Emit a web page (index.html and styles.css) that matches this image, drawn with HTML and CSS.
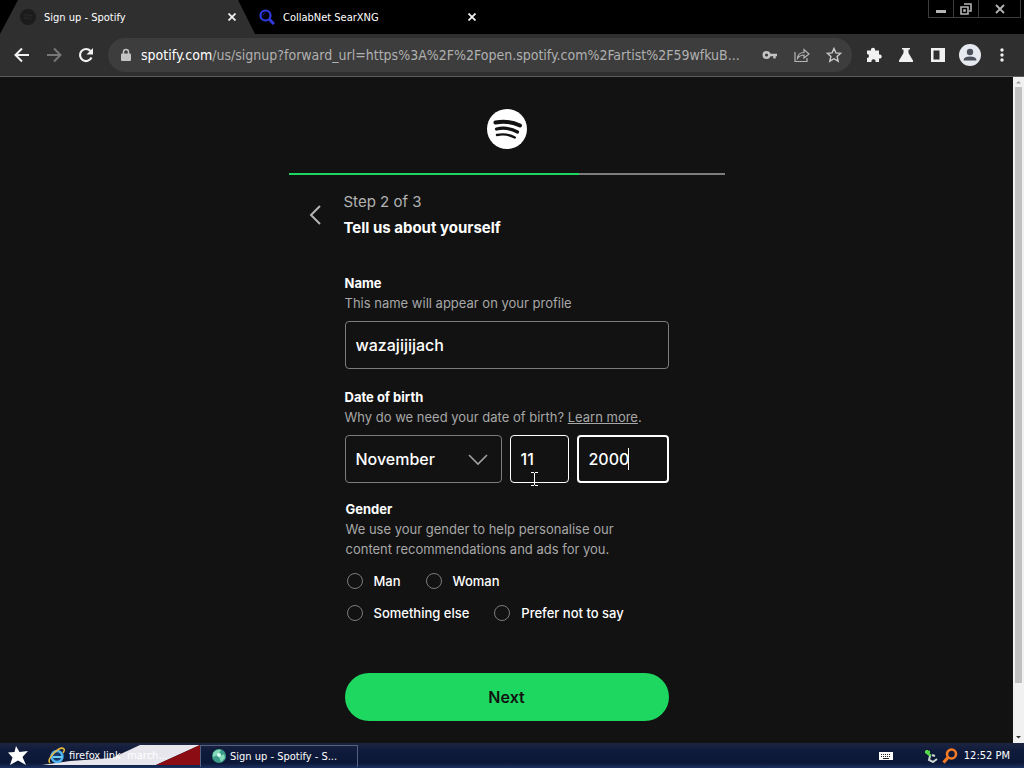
FILE: index.html
```html
<!DOCTYPE html>
<html lang="en">
<head>
  <meta charset="UTF-8">
  <meta name="viewport" content="width=device-width, initial-scale=1.0">
  <title>Sign up - Spotify</title>
  <link rel="stylesheet" href="styles.css">
</head>
<body>
  <!-- tabs -->
  <header class="tabs">
    <div class="tab active">
      <svg class="tab-icon" viewBox="0 0 16 16"><circle cx="8" cy="8" r="8" fill="#1c1c1c"/><path d="M4 6q4-1 8 1M4 9q4-1 7 1" stroke="#2c2c2c" fill="none"/></svg>
      <span class="tab-title">Sign up - Spotify</span>
      <button class="tab-close" aria-label="Close tab"><svg width="8" height="8" viewBox="0 0 8 8"><path d="M0.500 0.500l7 7M7.500 0.500l-7 7" stroke="#f1f1f1" stroke-width="1.800"/></svg></button>
    </div>
    <div class="tab">
      <svg class="tab-icon" viewBox="0 0 16 16"><circle cx="6.500" cy="6.500" r="5" fill="none" stroke="#3139e0" stroke-width="2.200"/><path d="M4 6.500q0-2.500 2.500-2.500" fill="none" stroke="#20259a"/><path d="M10.500 10.500l4.500 4.500" stroke="#3139e0" stroke-width="3"/></svg>
      <span class="tab-title">CollabNet SearXNG</span>
      <button class="tab-close" aria-label="Close tab"><svg width="8" height="8" viewBox="0 0 8 8"><path d="M0.500 0.500l7 7M7.500 0.500l-7 7" stroke="#f1f1f1" stroke-width="1.800"/></svg></button>
    </div>
    <div class="window-buttons">
      <button aria-label="Minimize"><svg width="12" height="12" viewBox="0 0 12 12"><path d="M1 7h10v3H1z" fill="#b5b5b5"/></svg></button>
      <button aria-label="Restore"><svg width="12" height="12" viewBox="0 0 12 12"><path d="M4 1h7v7H9M1 4h7v7H1zM4 7h1v1H4z" fill="none" stroke="#b5b5b5" stroke-width="1.600"/></svg></button>
      <button class="wide" aria-label="Close"><svg width="10" height="10" viewBox="0 0 10 10"><path d="M1 1l8 8M9 1l-8 8" stroke="#b5b5b5" stroke-width="1.800"/></svg></button>
    </div>
  </header>

  <!-- toolbar -->
  <nav class="toolbar">
    <button aria-label="Back"><svg width="16" height="16" viewBox="0 0 16 16"><path d="M15 8H2M8 1.500L1.500 8L8 14.500" fill="none" stroke="#f1f1f1" stroke-width="2"/></svg></button>
    <button aria-label="Forward"><svg width="16" height="16" viewBox="0 0 16 16"><path d="M1 8h13M8 1.500L14.500 8L8 14.500" fill="none" stroke="#777" stroke-width="2"/></svg></button>
    <button aria-label="Reload"><svg width="16" height="16" viewBox="0 0 16 16"><path d="M13.500 10.500A6 6 0 1 1 12.500 4" fill="none" stroke="#f1f1f1" stroke-width="2.200"/><path d="M15 1v6.500H8.500z" fill="#f1f1f1"/></svg></button>
    <div class="address">
      <svg width="12" height="14" viewBox="0 0 12 14"><path d="M3.500 6V4a2.500 2.500 0 0 1 5 0v2" fill="none" stroke="#c4c4c4" stroke-width="1.500"/><rect x="1" y="5.500" width="10" height="7.500" rx="1" fill="#c4c4c4"/></svg>
      <div class="url"><b>spotify.com</b>/us/signup?forward_url=https%3A%2F%2Fopen.spotify.com%2Fartist%2F59wfkuB...</div>
      <button aria-label="Passwords"><svg width="16" height="16" viewBox="0 0 16 16"><circle cx="4.500" cy="8" r="2.800" fill="none" stroke="#c4c4c4" stroke-width="2.400"/><path d="M7.500 8H15M12.500 8v3.500" stroke="#c4c4c4" stroke-width="2.400" fill="none"/></svg></button>
      <button aria-label="Share"><svg width="16" height="16" viewBox="0 0 16 16"><path d="M1 5v9.500h12V11" fill="none" stroke="#b5b5b5" stroke-width="1.200"/><path d="M3.500 11.500Q4 5.500 10 5.500V2.500l5 4.500l-5 4V8Q6 8 3.500 11.500z" fill="none" stroke="#b5b5b5" stroke-width="1.200"/></svg></button>
      <button aria-label="Bookmark"><svg width="16" height="16" viewBox="0 0 16 16"><path d="M8 1.500l1.900 4.400 4.800.4-3.600 3.200 1.100 4.700L8 11.700l-4.200 2.500 1.100-4.700L1.300 6.300l4.800-.4z" fill="none" stroke="#c9c9c9" stroke-width="1.400"/></svg></button>
    </div>
    <button aria-label="Extensions"><svg width="16" height="16" viewBox="0 0 16 16"><path d="M1 3.500h4a2.100 2.100 0 1 1 4 0h4v4a2.100 2.100 0 1 1 0 4V15H9.500a2.100 2.100 0 1 0-4 0H1v-4a2 2 0 1 0 0-4z" fill="#f1f1f1"/></svg></button>
    <button aria-label="Experiments"><svg width="16" height="16" viewBox="0 0 16 16"><path d="M4 1h8v1.500h-1.500V6L15 13.500V15H1v-1.500L5.500 6V2.500H4z" fill="#f1f1f1"/></svg></button>
    <button aria-label="Side panel"><svg width="16" height="16" viewBox="0 0 16 16"><path d="M1 1h14v14H1zM3.500 3.500v9h6v-9z" fill="#f1f1f1" fill-rule="evenodd"/></svg></button>
    <button aria-label="Profile"><svg width="22" height="22" viewBox="0 0 22 22"><circle cx="11" cy="11" r="11" fill="#e6e9ef"/><circle cx="11" cy="8" r="3.200" fill="#4b505a"/><path d="M4.500 16.500q0-4 6.500-4t6.500 4z" fill="#4b505a"/></svg></button>
    <button aria-label="Menu"><svg width="16" height="16" viewBox="0 0 16 16"><g fill="#f1f1f1"><circle cx="8" cy="3" r="1.700"/><circle cx="8" cy="8" r="1.700"/><circle cx="8" cy="13" r="1.700"/></g></svg></button>
  </nav>

  <div class="page">
    <main class="signup">
      <svg class="logo" viewBox="0 0 40 40" role="img" aria-label="Spotify"><circle cx="20" cy="20" r="20" fill="#fff"/><g fill="none" stroke="#121212" stroke-linecap="round"><path d="M8.500 13.500q13-2.500 24.500 3" stroke-width="4"/><path d="M9.500 20q11-2.500 21 3" stroke-width="3.200"/><path d="M10 26q9.500-2 17.800 2.500" stroke-width="2.400"/></g></svg>
      <div class="progress"><div class="progress-done"></div></div>

      <div class="step">
        <button class="back" aria-label="Go back"><svg width="24" height="24" viewBox="0 0 24 24"><path d="M16 3L7 12l9 9" fill="none" stroke="#b3b3b3" stroke-width="2"/></svg></button>
        <div>
          <div class="step-count">Step 2 of 3</div>
          <h1>Tell us about yourself</h1>
        </div>
      </div>

      <form class="form">
        <div class="group">
          <label class="label" for="name">Name</label>
          <p class="help">This name will appear on your profile</p>
          <input class="field" type="text" id="name" value="wazajijijach">
        </div>

        <div class="group">
          <label class="label" for="month">Date of birth</label>
          <p class="help">Why do we need your date of birth? <a href="#">Learn more</a>.</p>
          <div class="date">
            <div class="month">
              <select class="field" id="month">
                <option>November</option>
              </select>
              <svg class="arrow" width="20" height="12" viewBox="0 0 20 12"><path d="M1 1l9 9 9-9" fill="none" stroke="#a0a0a0" stroke-width="1.600"/></svg>
            </div>
            <div class="day">
              <input class="field light" type="text" aria-label="Day" value="11">
              <svg class="pointer" width="7" height="14" viewBox="0 0 7 14"><path d="M0 .5h3M4 .5h3M3.500 1v12M0 13.500h3M4 13.500h3" stroke="#fff"/></svg>
            </div>
            <div class="year">
              <input class="field focused" type="text" aria-label="Year" value="2000">
              <span class="caret"></span>
            </div>
          </div>
        </div>

        <fieldset class="gender">
          <legend class="label">Gender</legend>
          <p class="help">We use your gender to help personalise our content recommendations and ads for you.</p>
          <div class="radios">
            <label><input type="radio" name="gender">Man</label>
            <label><input type="radio" name="gender">Woman</label>
          </div>
          <div class="radios">
            <label><input type="radio" name="gender">Something else</label>
            <label><input type="radio" name="gender">Prefer not to say</label>
          </div>
        </fieldset>

        <button class="next" type="submit">Next</button>
      </form>
    </main>

    <div class="scrollbar">
      <svg width="11" height="10" viewBox="0 0 11 10"><path d="M3 6.500h5L5.500 4z" fill="#9a9a9a"/></svg>
      <div class="thumb"></div>
      <svg width="11" height="12" viewBox="0 0 11 12"><path d="M3 5h5L5.500 7.500z" fill="#333"/></svg>
    </div>
  </div>

  <!-- taskbar -->
  <footer class="taskbar">
    <button class="start" aria-label="Start"><svg width="20" height="20" viewBox="0 0 20 20"><path d="M8 0l3.500 6L20 5l-5.500 6L18 19l-8-4.500L2 19l2.500-7.500L0 6.500l6.500-.5z" fill="#fff"/></svg></button>
    <button class="task">
      <svg class="flag" viewBox="0 0 158 20" preserveAspectRatio="none"><path d="M0 20L28 16L70 13L98 0h60l-44 20z" fill="#e6e6ec"/><path d="M158 0v20h-44z" fill="#8b0c12"/></svg>
      <svg class="task-icon" width="18" height="18" viewBox="0 0 18 18"><circle cx="9" cy="9.500" r="5.500" fill="#163a6b" stroke="#4fb4ee" stroke-width="2.500"/><path d="M5 10h9" stroke="#6ecbf5" stroke-width="2"/><path d="M2 16Q-1 13 6 6T16 2q1 1-1 4" fill="none" stroke="#e9ba42" stroke-width="1.600"/></svg>
      <span class="task-title">firefox link&nbsp; march...</span>
    </button>
    <button class="task current">
      <svg class="task-icon" width="16" height="16" viewBox="0 0 16 16"><circle cx="8" cy="8" r="7" fill="#3c9c89"/><path d="M2 5q4-5 8-3l-3 5-5 2zM8 9l5-3 1 4-4 4z" fill="#83d9b8"/><circle cx="8" cy="7" r="2" fill="#d5fff0"/></svg>
      <span class="task-title">Sign up - Spotify - S...</span>
    </button>
    <div class="tray">
      <svg class="keyboard" width="14" height="8" viewBox="0 0 14 8"><path d="M0 0h14v8H0z" fill="#fff"/><path d="M2 2.500h10M2 4.500h10" stroke="#222" stroke-dasharray="1 1"/><path d="M4 6.500h6" stroke="#222"/></svg>
      <svg width="14" height="14" viewBox="0 0 14 14"><path d="M3 1v3l4 3M1 3h5" stroke="#55d84a" stroke-width="2.400" fill="none"/><path d="M6 7l-1 4 4 2 4-3M8 6l3 1" stroke="#c8d6cf" stroke-width="2" fill="none"/></svg>
      <svg width="16" height="16" viewBox="0 0 16 16"><circle cx="9.500" cy="6" r="4.500" fill="none" stroke="#f47a24" stroke-width="2.600"/><path d="M6 9.500L1.500 14.500" stroke="#f47a24" stroke-width="3.200"/></svg>
      <time>12:52 PM</time>
    </div>
  </footer>
</body>
</html>
```
FILE: styles.css
```css
* {
  box-sizing: border-box;
}
body {
  margin: 0;
  height: 100vh;
  display: flex;
  flex-direction: column;
  overflow: hidden;
  background: #121212;
  color: #fff;
  font-family: "DejaVu Sans Condensed", "DejaVu Sans", sans-serif;
  font-size: 11px;
}
button {
  padding: 0;
  border: none;
  background: none;
  color: inherit;
  font: inherit;
  display: flex;
  align-items: center;
  justify-content: center;
}
svg {
  display: block;
  flex-shrink: 0;
}

/* browser */
.tabs {
  display: flex;
  align-items: flex-start;
  height: 34px;
  background: #000;
}
.tab {
  display: flex;
  align-items: center;
  width: 240px;
  height: 34px;
  padding: 0 16px 0 4px;
}
.tab.active {
  width: 255px;
  padding-left: 20px;
  background: #2f2f2f;
  clip-path: polygon(18px 0, 238px 0, 255px 100%, 0 100%);
}
.tab-icon {
  width: 16px;
  height: 16px;
  margin-right: 8px;
}
.tab-title {
  flex: 1;
}
.tab-close {
  width: 14px;
  height: 14px;
}
.window-buttons {
  display: flex;
  margin: 0 3px 0 auto;
  border: 1px solid #3c3c3c;
  border-top: none;
}
.window-buttons button {
  width: 25px;
  height: 17px;
  border-right: 1px solid #3c3c3c;
}
.window-buttons .wide {
  width: 41px;
  border-right: none;
}
.toolbar {
  display: flex;
  align-items: center;
  height: 43px;
  padding: 0 6px;
  background: #2f2f2f;
  border-bottom: 1px solid #5c5c5c;
}
.toolbar button {
  width: 32px;
  height: 32px;
  flex-shrink: 0;
}
.address {
  flex: 1;
  min-width: 0;
  display: flex;
  align-items: center;
  height: 34px;
  margin: 0 6px;
  padding: 0 2px 0 12px;
  border-radius: 17px;
  background: #3d3d3d;
}
.url {
  flex: 1;
  min-width: 0;
  margin: 0 4px 0 9px;
  overflow: hidden;
  white-space: nowrap;
  color: #b0b0b0;
  font-size: 14px;
}
.url b {
  color: #fff;
  font-weight: normal;
}

/* sign up page */
.page {
  flex: 1;
  min-height: 0;
  display: flex;
  font-family: Inter, "Liberation Sans", sans-serif;
}
.signup {
  flex: 1;
  padding-top: 32px;
}
.logo {
  width: 40px;
  height: 40px;
  margin: 0 auto 24px;
}
.progress {
  max-width: 436px;
  height: 2px;
  margin: 0 auto;
  background: #7c7c7c;
}
.progress-done {
  width: 66.6%;
  height: 2px;
  background: #1ed760;
}
.step {
  display: flex;
  align-items: center;
  max-width: 436px;
  margin: 14px auto 32px;
  font-size: 15px;
  line-height: 26px;
}
.step .back {
  width: 24px;
  height: 24px;
  margin: 0 16px 0 15px;
}
.step-count {
  color: #b3b3b3;
}
h1 {
  margin: 0;
  font-size: 15px;
  font-weight: 700;
}
.form {
  max-width: 324px;
  margin: 0 auto;
  font-size: 13px;
  line-height: 20px;
}
.group {
  margin-bottom: 18px;
}
.group + .group {
  margin-bottom: 16px;
}
.label {
  display: block;
  padding: 0;
  font-weight: 700;
}
.help {
  margin: 0 0 8px;
  color: #a7a7a7;
}
.help a {
  color: inherit;
}
.field {
  display: block;
  width: 100%;
  height: 48px;
  padding: 0 10px;
  border: 1px solid #7c7c7c;
  border-radius: 4px;
  outline: none;
  appearance: none;
  background: #121212;
  color: #fff;
  font: 500 16px Inter, "Liberation Sans", sans-serif;
}
.field.light {
  border-color: #fff;
}
.field.focused {
  border: 2px solid #fff;
}
.date {
  display: flex;
  gap: 8px;
}
.month {
  position: relative;
  flex: 1;
}
.arrow {
  position: absolute;
  right: 14px;
  top: 19px;
  pointer-events: none;
}
.day {
  position: relative;
  width: 59px;
}
.pointer {
  position: absolute;
  left: 21px;
  top: 37px;
}
.year {
  position: relative;
  width: 92px;
}
.caret {
  position: absolute;
  left: 51px;
  top: 13px;
  width: 1px;
  height: 22px;
  background: #fff;
}
.gender {
  margin: 0 0 44px;
  padding: 0 0 0 1px;
  border: none;
}
.gender .help {
  max-width: 290px;
  margin-bottom: 6px;
}
.radios {
  display: flex;
  gap: 24px;
}
.radios label {
  display: flex;
  align-items: center;
  height: 32px;
  font-weight: 500;
}
.radios input {
  appearance: none;
  width: 16px;
  height: 16px;
  margin: 0 11px 0 1px;
  border: 1px solid #7c7c7c;
  border-radius: 50%;
}
.next {
  width: 100%;
  height: 48px;
  border-radius: 24px;
  background: #1ed760;
  color: #121212;
  font-size: 16px;
  font-weight: 600;
}
.scrollbar {
  display: flex;
  flex-direction: column;
  width: 11px;
  background: #f1f1f1;
}
.thumb {
  flex: 1;
  margin: 0 2px 48px;
  background: #c1c1c1;
}

/* taskbar */
.taskbar {
  display: flex;
  align-items: center;
  height: 25px;
  background: linear-gradient(#1c2440, #101b3b 30%, #0b1736 80%, #1c3262);
}
.start {
  width: 36px;
  margin-right: 6px;
}
.task {
  position: relative;
  width: 158px;
  height: 22px;
  padding: 0 6px;
  justify-content: flex-start;
}
.task.current {
  padding-left: 10px;
  border: 1px solid #53617f;
  border-bottom: none;
}
.flag {
  position: absolute;
  left: 0;
  top: 0;
  width: 100%;
  height: 20px;
}
.task-icon,
.task-title {
  position: relative;
}
.task-title {
  margin-left: 3px;
}
.tray {
  display: flex;
  align-items: center;
  margin-left: auto;
  margin-right: 14px;
}
.keyboard {
  margin-right: 31px;
}
.tray svg + svg {
  margin-right: 4px;
}
.tray time {
  margin-left: 2px;
}
```
